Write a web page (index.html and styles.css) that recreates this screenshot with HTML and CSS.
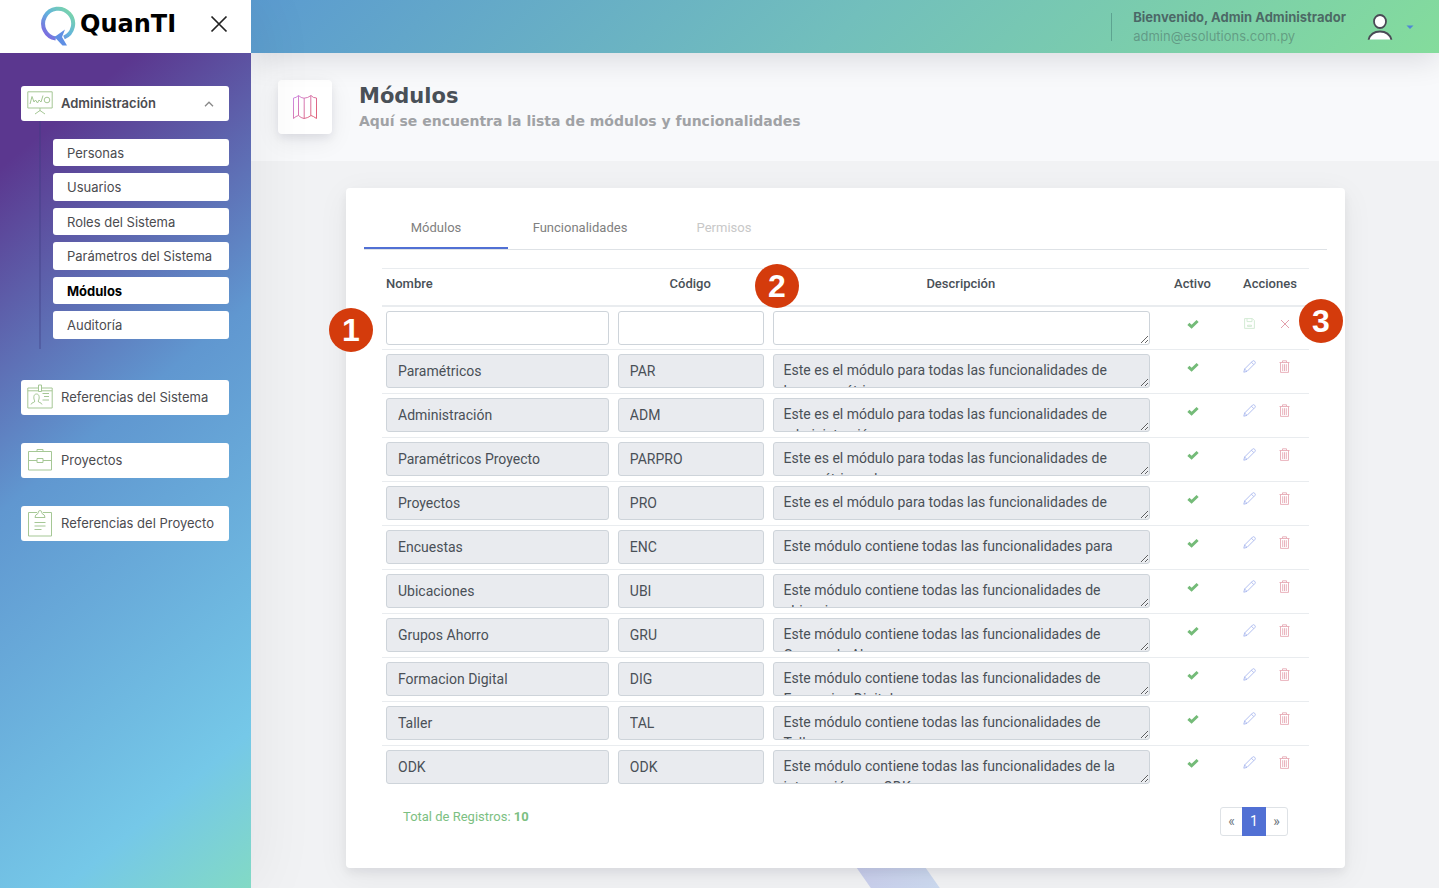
FILE: index.html
```html
<!DOCTYPE html>
<html lang="es">
<head>
<meta charset="utf-8">
<title>QuanTI - Módulos</title>
<link rel="stylesheet" href="styles.css">
</head>
<body>
<svg class="sprite" aria-hidden="true">
  <symbol id="check" viewBox="0 0 12 10"><path d="M1.400 4.800 4.600 7.800 10.600 2" fill="none" stroke="currentColor" stroke-width="3"/></symbol>
  <symbol id="pencil" viewBox="0 0 13 13"><path d="M.8 12.200 1.600 9 9.600 1Q10.600.2 11.700 1.300T12 3.400L4 11.400ZM8.400 2.200 10.800 4.600M1.600 9 4 11.400" fill="none" stroke="currentColor" stroke-width=".9"/></symbol>
  <symbol id="trash" viewBox="0 0 11 13"><path d="M.5 2.500H10.500M3.500 2.500V.8H7.500V2.500M1.500 2.500V12.400H9.500V2.500M3.700 4.200V11M5.500 4.200V11M7.300 4.200V11" fill="none" stroke="currentColor" stroke-width=".9"/></symbol>
  <symbol id="save" viewBox="0 0 11 11"><path d="M.6.6H8.400L10.400 2.600V10.400H.6ZM3 .6V3.600H8V.6M3.500 7.200H7.500V8.400H3.500Z" fill="none" stroke="currentColor" stroke-width=".9"/></symbol>
  <symbol id="cross" viewBox="0 0 10 10"><path d="M1 1 9 9M9 1 1 9" fill="none" stroke="currentColor"/></symbol>
</svg>
<div class="app">
  <aside class="sidebar">
    <div class="brand">
      <svg class="logo-mark" viewBox="0 0 36 42" aria-hidden="true">
        <defs><linearGradient id="lg" x1="0" y1="1" x2="1" y2="0"><stop offset="0.1" stop-color="#7b6be0"/><stop offset=".5" stop-color="#62b3dd"/><stop offset="1" stop-color="#7fdca0"/></linearGradient></defs>
        <path d="M15.800 32.500A15 15 0 1 1 24 31.500" fill="none" stroke="url(#lg)" stroke-width="4"/>
        <path d="M14.500 31 25 23.500 22 31 27 39.500H22.500Z" fill="#5f8fe4"/>
      </svg>
      <span class="logo-text">QuanTI</span>
      <button class="close" type="button" aria-label="Cerrar menú"><svg viewBox="0 0 18 18"><path d="M1.500 1.500 16.500 16.500M16.500 1.500 1.500 16.500" fill="none" stroke="#222" stroke-width="1.700"/></svg></button>
    </div>
    <nav class="menu">
      <div class="group">
        <a class="item open" href="#">
          <svg class="item-icon" viewBox="0 0 26 26"><path d="M.8 1.800H25.200V18H.8ZM13 18V21M8 24 13 20.500 18 24M3 14 5 6.500 7 12 8.500 10 10.500 13 12 10 14 12 16 5.500" fill="none" stroke="currentColor"/><circle cx="20" cy="10" r="2.800" fill="none" stroke="currentColor"/></svg>
          <span>Administración</span>
          <svg class="chevron" viewBox="0 0 10 6"><path d="M1 5.300 5 1.200 9 5.300" fill="none" stroke="currentColor" stroke-width="1.300"/></svg>
        </a>
        <div class="submenu">
          <a href="#">Personas</a>
          <a href="#">Usuarios</a>
          <a href="#">Roles del Sistema</a>
          <a href="#">Parámetros del Sistema</a>
          <a class="current" href="#">Módulos</a>
          <a href="#">Auditoría</a>
        </div>
      </div>
      <a class="item" href="#">
        <svg class="item-icon" viewBox="0 0 26 26"><path d="M11.500 4H.8V24H25.200V4H14.500M.8 6.800H11.500M14.500 6.800H25.200M11.500 1H14.500V7.500H11.500ZM15.500 9.500H22M17 12.500H22M15.500 16H22M4 20.500C4.500 18 8 19 7.800 17 6.500 15 6 10 9.500 10S12.500 15 11.200 17C11 19 14.500 18 15 20.500" fill="none" stroke="currentColor"/></svg>
        <span>Referencias del Sistema</span>
      </a>
      <a class="item" href="#">
        <svg class="item-icon" viewBox="0 0 26 26"><path d="M1.500 4.500H24.500V23H1.500ZM10 4.500V2.500H16V4.500M1.500 13.500H10M16 13.500H24.500M10 11.500H16V15.500H10Z" fill="none" stroke="currentColor"/></svg>
        <span>Proyectos</span>
      </a>
      <a class="item" href="#">
        <svg class="item-icon tall" viewBox="0 0 26 28"><path d="M10 3.500H1.500V27H24.500V3.500H16M8 8.500Q8 5.500 11 4.500 11 1.500 13 1.500T15 4.500Q18 5.500 18 8.500ZM7.500 13.500H18.500M7.500 17H18.500M7.500 20.500H14.500" fill="none" stroke="currentColor"/></svg>
        <span>Referencias del Proyecto</span>
      </a>
    </nav>
  </aside>
  <div class="content">
    <header class="topbar">
      <div class="welcome">
        <strong>Bienvenido, Admin Administrador</strong>
        <span>admin@esolutions.com.py</span>
      </div>
      <button class="account" type="button" aria-label="Cuenta">
        <svg class="avatar" viewBox="0 0 26 28"><path d="M1.500 26.500Q4 18.500 13 18.500T24.500 26.500Z" fill="#fff"/><path d="M1.500 26.800Q4 18.500 13 18.500T24.500 26.800" fill="none" stroke="#4a4a55" stroke-width="1.800"/><ellipse cx="13" cy="8.500" rx="6" ry="6.500" fill="#fff" stroke="#4a4a55" stroke-width="1.800"/></svg>
        <svg class="caret" viewBox="0 0 8 4"><path d="M.5.5H7.500L4 4Z" fill="#4f86d6"/></svg>
      </button>
    </header>
    <div class="page-title">
      <div class="title-icon">
        <svg viewBox="0 0 26 26"><defs><linearGradient id="mg" x1="0" y1="0" x2="1" y2=".6"><stop offset="0" stop-color="#cf8ce6"/><stop offset="1" stop-color="#e0647c"/></linearGradient></defs><path d="M1.500 4Q4 4 6.500 1.500 9 4 12 4.200 16 4 19 1.500 21 4 24.500 4V24.500Q21 22 19 21.500 16 24 12 24.500 9 24 6.500 21.500 4 22 1.500 24.500ZM6.500 1.500V21.500M12.200 4V24.500M18.800 1.500V21.500" fill="none" stroke="url(#mg)"/></svg>
      </div>
      <div>
        <h1>Módulos</h1>
        <p>Aquí se encuentra la lista de módulos y funcionalidades</p>
      </div>
    </div>
    <main>
      <svg class="backdrop" viewBox="0 0 120 50" aria-hidden="true"><defs><linearGradient id="bd"><stop offset="0" stop-color="#c9cdec"/><stop offset="1" stop-color="#cddcf0"/></linearGradient></defs><path d="M0 0H69L104 50H35Z" fill="url(#bd)"/></svg>
      <section class="card">
        <div class="tabs" role="tablist">
          <button class="tab active" type="button" role="tab">Módulos</button>
          <button class="tab" type="button" role="tab">Funcionalidades</button>
          <button class="tab" type="button" role="tab" disabled>Permisos</button>
        </div>
        <div class="table-area">
          <table>
            <colgroup><col class="c-name"><col class="c-code"><col class="c-desc"><col class="c-active"><col class="c-actions"></colgroup>
            <thead><tr><th>Nombre</th><th>Código</th><th>Descripción</th><th>Activo</th><th>Acciones</th></tr></thead>
            <tbody id="rows"></tbody>
          </table>
          <span class="marker m1">1</span>
          <span class="marker m2">2</span>
          <span class="marker m3">3</span>
        </div>
        <footer class="card-foot">
          <p>Total de Registros: <strong>10</strong></p>
          <nav class="pager" aria-label="Paginación"><a href="#">«</a><a class="on" href="#">1</a><a href="#">»</a></nav>
        </footer>
      </section>
    </main>
  </div>
</div>
<script src="rows.js"></script>
</body>
</html>
```
FILE: styles.css
```css
* { box-sizing: border-box; }
body { margin: 0; font-family: Roboto, sans-serif; font-size: 13px; color: #495057; background: #f1f2f4; }
a { color: inherit; text-decoration: none; }
button { font: inherit; border: 0; background: none; padding: 0; }
h1, p { margin: 0; }
.sprite { display: none; }
.app { display: grid; grid-template-columns: 251px minmax(0, 1fr); height: 100vh; overflow: hidden; }

.sidebar { display: flex; flex-direction: column; position: relative; z-index: 2; box-shadow: 7px 0 60px rgba(8, 10, 37, .06); font-family: Inter, sans-serif; color: #4b4b4f; }
.brand { display: flex; align-items: center; height: 53px; padding-left: 40px; background: #fff; }
.logo-mark { width: 36px; height: 42px; }
.logo-text { flex: 1; padding: 0 0 6px 4px; font: 700 24px/32px "DejaVu Sans", sans-serif; color: #000; }
.close { width: 18px; height: 18px; margin: 0 23px 5px 0; }
.close svg { display: block; }
.menu { flex: 1; display: flex; flex-direction: column; padding: 33px 22px 0 21px; background: linear-gradient(140deg, #5b378f 0, #5b378f 11%, #6097d0 44%, #75c8e8 85%, #84dcc0 102%); }
.item { display: flex; align-items: center; gap: 8px; height: 35px; margin-bottom: 28px; padding: 0 15px 2px 6px; border-radius: 3px; background: #fff; }
.item span { flex: 1; }
.item-icon { width: 26px; height: 26px; color: #a5c795; }
.item-icon.tall { height: 28px; }
.item.open { margin: 0; font-weight: 600; }
.chevron { width: 10px; height: 6px; margin-top: 3px; color: #888; }
.submenu { display: flex; flex-direction: column; gap: 7px; margin: 0 0 31px 18px; padding: 18px 0 10px 12px; border-left: 2px solid rgba(60, 60, 130, .35); }
.submenu a { height: 28px; line-height: 28px; padding-left: 14px; border-radius: 3px; background: #fff; }
.submenu a:nth-child(odd) { height: 27px; }
.submenu .current { color: #000; font-weight: 700; }

.content { display: flex; flex-direction: column; min-width: 0; }
.topbar { display: flex; align-items: center; justify-content: flex-end; gap: 21px; height: 53px; padding-right: 25px; position: relative; z-index: 1; background: linear-gradient(135deg, #5b9bd0, #72bfbc 50%, #84dc9c); box-shadow: 0 7px 30px rgba(8, 10, 37, .12); font-family: Inter, sans-serif; }
.welcome { display: flex; flex-direction: column; gap: 3px; padding-left: 21px; border-left: 1px solid rgba(40, 90, 90, .35); line-height: 16px; height: 28px; justify-content: center; color: rgba(60, 70, 80, .75); }
.welcome span { color: rgba(60, 80, 80, .42); }
.account { display: flex; align-items: center; gap: 13px; }
.avatar { width: 26px; height: 28px; }
.caret { width: 8px; height: 4px; }

.page-title { display: flex; gap: 27px; height: 108px; padding: 27px; background: #f8f9fb; }
.title-icon { display: grid; place-items: center; width: 54px; height: 54px; border-radius: 4px; background: #fff; box-shadow: 0 7px 24px rgba(8, 10, 37, .07), 0 4px 8px rgba(8, 10, 37, .07); }
.title-icon svg { width: 26px; height: 26px; }
.page-title h1 { font: 700 21px/32px "DejaVu Sans", sans-serif; color: #495057; }
.page-title p { font: 700 14px/18px "DejaVu Sans", sans-serif; color: #a0a2a5; }

main { position: relative; flex: 1; padding: 27px 94px 20px 95px; }
.backdrop { position: absolute; left: 596px; bottom: -16px; width: 120px; height: 50px; }
.card { position: relative; display: flex; flex-direction: column; padding: 18px 18px 32px; border-radius: 4px; background: #fff; box-shadow: 0 7px 32px rgba(8, 10, 37, .06), 0 5px 10px rgba(8, 10, 37, .06); }
.tabs { display: flex; border-bottom: 1px solid #dee2e6; }
.tab { width: 144px; height: 43px; padding-top: 2px; color: #808080; border-bottom: 2px solid transparent; }
.tab.active { border-color: #5170d4; }
.tab:disabled { color: #c8c8c8; }
.table-area { position: relative; padding: 18px 18px 0; }
table { width: 100%; table-layout: fixed; border-collapse: separate; border-spacing: 0; }
.c-name { width: 24.9%; } .c-code { width: 16.7%; } .c-active { width: 77px; } .c-actions { width: 78px; }
th { height: 39px; padding: 0 4px 8px; border-top: 1px solid #e9ecef; border-bottom: 2px solid #e9ecef; font-weight: 500; color: #495057; }
th:first-child { text-align: left; }
td { padding: 4px 4px 5px 5px; border-bottom: 1px solid #e9ecef; vertical-align: top; text-align: center; }
td:first-child { padding-left: 4px; }
.new-row td { padding-bottom: 4px; }
tr:last-child td { border-bottom: 0; }
.field { display: block; width: 100%; height: 34px; padding: 0 11px; border: 1px solid #ced4da; border-radius: 3px; background: #fff; color: #495057; font: 14px/22px Roboto, sans-serif; }
textarea.field { padding: 5px 22px 5px 10px; line-height: 21px; overflow: hidden; resize: vertical; }
.field:disabled { background: #e9ebef; opacity: 1; }
.actions { display: flex; justify-content: center; gap: 22px; padding: 6px 7px 0 0; }
.actions button { display: grid; place-items: center; width: 13px; height: 13px; }
.actions svg { width: 13px; height: 13px; }
.edit { color: #a9b8ee; } .remove { color: #e6aab5; } .save { color: #cfe9d0; } .cancel { color: #e3a0ac; }
.actions .save svg { width: 11px; height: 11px; } .actions .cancel svg { width: 10px; height: 10px; }
.check { width: 12px; height: 10px; margin-top: 8px; color: #74bb78; }
.marker { position: absolute; display: grid; place-items: center; width: 44px; height: 44px; border-radius: 50%; background: #d43b0c; color: #fff; font: 700 32px "Liberation Sans", sans-serif; }
.m1 { left: -35px; top: 58px; } .m2 { left: 391px; top: 14px; } .m3 { right: -16px; top: 49px; }
.card-foot { display: flex; justify-content: space-between; padding: 14px 39px 0; color: #7cc082; }
.card-foot p { line-height: 20px; padding-top: 4px; }
.pager { display: flex; height: 29px; border: 1px solid #dee2e6; border-radius: 3px; line-height: 27px; color: #6c757d; margin-top: 4px; }
.pager a { width: 21px; text-align: center; font-size: 14px; }
.pager .on { width: 24px; margin: -1px 0; line-height: 29px; background: #5170d4; color: #fff; }
```
FILE: rows.js
```js
const rows = [
  ["Paramétricos", "PAR", "Este es el módulo para todas las funcionalidades de los paramétricos"],
  ["Administración", "ADM", "Este es el módulo para todas las funcionalidades de administración"],
  ["Paramétricos Proyecto", "PARPRO", "Este es el módulo para todas las funcionalidades de paramétricos de"],
  ["Proyectos", "PRO", "Este es el módulo para todas las funcionalidades de"],
  ["Encuestas", "ENC", "Este módulo contiene todas las funcionalidades para"],
  ["Ubicaciones", "UBI", "Este módulo contiene todas las funcionalidades de ubicaciones"],
  ["Grupos Ahorro", "GRU", "Este módulo contiene todas las funcionalidades de Grupos de Ahorro"],
  ["Formacion Digital", "DIG", "Este módulo contiene todas las funcionalidades de Formacion Digital"],
  ["Taller", "TAL", "Este módulo contiene todas las funcionalidades de Taller"],
  ["ODK", "ODK", "Este módulo contiene todas las funcionalidades de la integración con ODK"]
];
const icon = (id, cls = "") => `<svg class="${cls}"><use href="#${id}"/></svg>`;
const row = ([name, code, text], isNew) => {
  const state = isNew ? "" : "disabled";
  const actions = isNew
    ? `<button type="button" class="save" aria-label="Guardar">${icon("save")}</button><button type="button" class="cancel" aria-label="Cancelar">${icon("cross")}</button>`
    : `<button type="button" class="edit" aria-label="Editar">${icon("pencil")}</button><button type="button" class="remove" aria-label="Eliminar">${icon("trash")}</button>`;
  return `<tr class="${isNew ? "new-row" : ""}"><td><input class="field" aria-label="Nombre" value="${name}" ${state}></td>
    <td><input class="field" aria-label="Código" value="${code}" ${state}></td>
    <td><textarea class="field" aria-label="Descripción" ${state}>${text}</textarea></td>
    <td>${icon("check", "check")}</td><td><div class="actions">${actions}</div></td></tr>`;
};
document.getElementById("rows").innerHTML =
  row(["", "", ""], true) + rows.map(r => row(r, false)).join("");
```
